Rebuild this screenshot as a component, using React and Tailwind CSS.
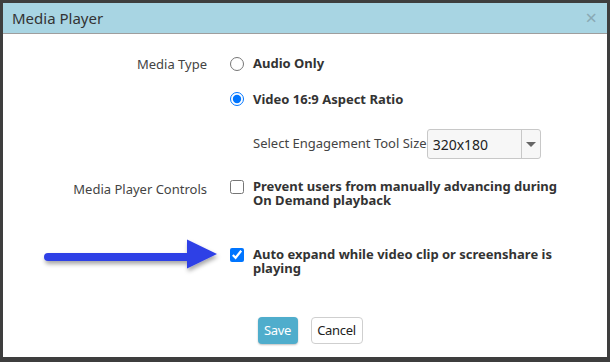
import { useState } from 'react'

const font = { fontFamily: '"Noto Sans", "Open Sans", Arial, sans-serif' }

function Arrow() {
  return (
    <svg
      className="absolute left-[36px] top-[-8px]"
      width="186"
      height="40"
      viewBox="0 0 186 40"
    >
      <defs>
        <filter id="sh" x="-10%" y="-30%" width="120%" height="180%">
          <feDropShadow dx="1" dy="3" stdDeviation="2" floodColor="#000" floodOpacity="0.35" />
        </filter>
      </defs>
      <g filter="url(#sh)" fill="#2f3fe6">
        <rect x="5" y="14" width="147" height="8" rx="4" />
        <polygon points="148,0.5 178,15 148,29.5" />
      </g>
    </svg>
  )
}

export default function App() {
  const [media, setMedia] = useState('video')
  const [prevent, setPrevent] = useState(false)
  const [expand, setExpand] = useState(true)

  return (
    <div className="h-[362px] w-[610px] bg-[#3e3e3e] pb-[5px] pl-[3px] pr-[3px] pt-[3px]" style={font}>
      <div className="flex h-full flex-col bg-white">
        <div className="flex h-[31px] items-center justify-between border-b border-[#9e9e9e] bg-[#a8d5e3] pl-[9px] pr-[10px]">
          <span className="text-[15px] text-[#333]">Media Player</span>
          <span className="text-[20px] leading-none text-[#8aa9b4]">×</span>
        </div>

        <div className="grid grid-cols-[204px_1fr] gap-x-[23px] pt-[20px] text-[13px] text-[#333]">
          <div className="pt-[1px] text-right text-[#444]">Media Type</div>
          <div className="flex flex-col gap-[16px]">
            <label className="flex items-center gap-[9px] font-bold">
              <input
                type="radio"
                name="media"
                checked={media === 'audio'}
                onChange={() => setMedia('audio')}
                className="m-0 h-[14px] w-[14px] accent-[#0075ff]"
              />
              Audio Only
            </label>
            <label className="flex items-center gap-[9px] font-bold">
              <input
                type="radio"
                name="media"
                checked={media === 'video'}
                onChange={() => setMedia('video')}
                className="m-0 h-[14px] w-[14px] accent-[#0075ff]"
              />
              Video 16:9 Aspect Ratio
            </label>
            <div className="mt-[4px] flex items-center pl-[23px]">
              <span className="text-[#444]">Select Engagement Tool Size</span>
              <div className="flex h-[30px] w-[114px] items-stretch rounded-[3px] border border-[#c8c8c8] bg-[#f7f7f7]">
                <span className="flex flex-1 items-center pl-[5px] text-[14px] text-[#222]">320x180</span>
                <span className="flex w-[19px] items-center justify-center border-l border-[#c8c8c8]">
                  <span className="h-0 w-0 border-l-[5px] border-r-[5px] border-t-[5px] border-l-transparent border-r-transparent border-t-[#666]" />
                </span>
              </div>
            </div>
          </div>

          <div className="mt-[20px] pt-[1px] text-right text-[#444]">Media Player Controls</div>
          <label className="mt-[20px] flex items-start gap-[9px] font-bold leading-[14px]">
            <input
              type="checkbox"
              checked={prevent}
              onChange={(e) => setPrevent(e.target.checked)}
              className="m-0 mt-[1px] h-[14px] w-[14px] shrink-0 accent-[#0075ff]"
            />
            <span className="leading-[14px]">
              Prevent users from manually advancing during
              <br />
              On Demand playback
            </span>
          </label>

          <div className="relative mt-[40px]">
            <Arrow />
          </div>
          <label className="mt-[40px] flex items-start gap-[9px] font-bold leading-[14px]">
            <input
              type="checkbox"
              checked={expand}
              onChange={(e) => setExpand(e.target.checked)}
              className="m-0 mt-[1px] h-[14px] w-[14px] shrink-0 accent-[#0075ff]"
            />
            <span className="leading-[14px]">
              Auto expand while video clip or screenshare is
              <br />
              playing
            </span>
          </label>
        </div>

        <div className="mt-[42px] flex justify-center gap-[13px] pl-[10px]">
          <button className="h-[27px] w-[40px] rounded-[4px] bg-[#4fadcc] text-[13px] tracking-[-0.3px] text-white shadow-[0_1px_2px_rgba(0,0,0,0.25)]">
            Save
          </button>
          <button className="h-[27px] w-[52px] rounded-[4px] border border-[#cfcfcf] bg-white text-[13px] tracking-[-0.3px] text-[#222]">
            Cancel
          </button>
        </div>
      </div>
    </div>
  )
}
